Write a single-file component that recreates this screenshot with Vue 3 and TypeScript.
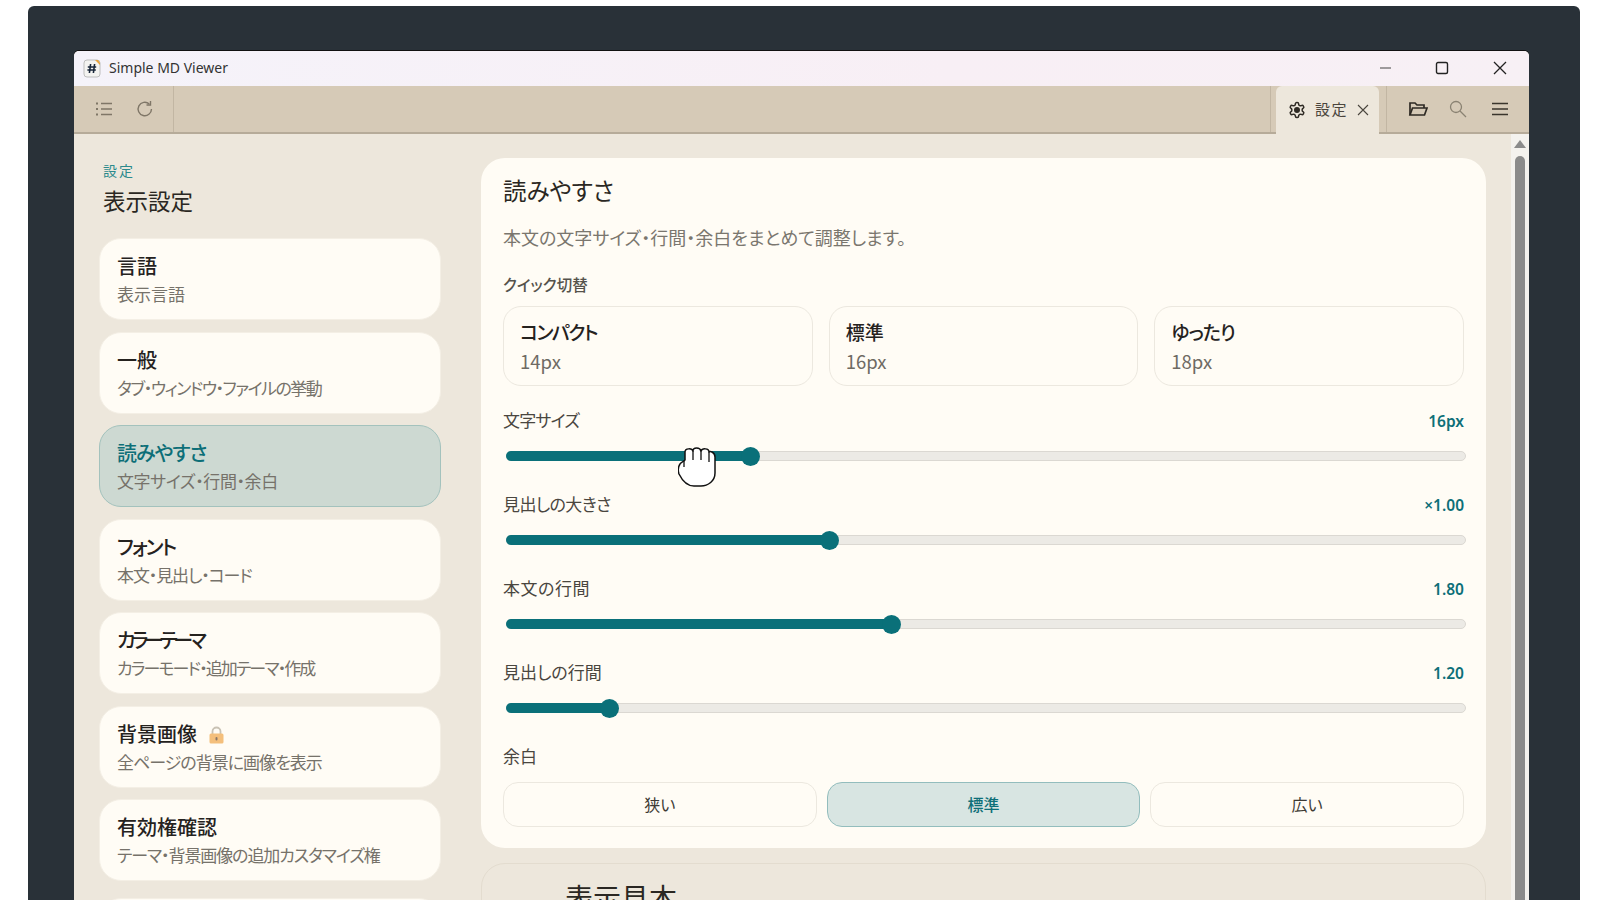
<template>
  <div class="frame">
    <div class="window">
      <header class="titlebar">
        <svg class="app-icon" width="19" height="19" viewBox="0 0 19 19">
          <rect x="1" y="1" width="16" height="17" rx="3" fill="#f4f3f1" stroke="#bdbdbd" />
          <path d="M12 1h3l2 3v2z" fill="#e8a33c" />
          <path d="M7.600 5 6.400 14M11.600 5l-1.200 9M4.800 8h8.400M4.400 11h8.400" stroke="#18263a" stroke-width="1.600" fill="none" />
        </svg>
        <span class="app-name">Simple MD Viewer</span>
        <div class="win-controls">
          <svg width="14" height="14" viewBox="0 0 14 14"><path d="M3 7h11" stroke="#444" stroke-width="1.200" /></svg>
          <svg width="14" height="14" viewBox="0 0 14 14"><rect x="1.500" y="1.500" width="11" height="11" rx="1.500" fill="none" stroke="#222" stroke-width="1.400" /></svg>
          <svg width="14" height="14" viewBox="0 0 14 14"><path d="M1 1l12 12M13 1 1 13" stroke="#222" stroke-width="1.300" /></svg>
        </div>
      </header>

      <div class="toolbar">
        <div class="tool-left">
          <svg width="18" height="18" viewBox="0 0 18 18" fill="none" stroke="#7f7667" stroke-width="1.400">
            <path d="M6 3.500h11M6 9h11M6 14.500h11" />
            <path d="M1 3.500h2M1 9h2M1 14.500h2" stroke-width="2" />
          </svg>
          <svg width="18" height="18" viewBox="0 0 18 18" fill="none" stroke="#7f7667" stroke-width="1.400">
            <path d="M15.500 9A6.700 6.700 0 1 1 13.300 4" />
            <path d="M14.500 1v4h-4" />
          </svg>
        </div>
        <div class="tool-spacer"></div>
        <div class="tab">
          <svg width="18" height="18" viewBox="0 0 24 24" fill="none" stroke="#2e2a24" stroke-width="2">
            <path d="M12.220 2h-.44a2 2 0 0 0-2 2v.18a2 2 0 0 1-1 1.730l-.43.25a2 2 0 0 1-2 0l-.15-.08a2 2 0 0 0-2.730.73l-.22.38a2 2 0 0 0 .73 2.730l.15.1a2 2 0 0 1 1 1.720v.51a2 2 0 0 1-1 1.740l-.15.09a2 2 0 0 0-.73 2.730l.22.38a2 2 0 0 0 2.730.73l.15-.08a2 2 0 0 1 2 0l.43.25a2 2 0 0 1 1 1.730V20a2 2 0 0 0 2 2h.44a2 2 0 0 0 2-2v-.18a2 2 0 0 1 1-1.730l.43-.25a2 2 0 0 1 2 0l.15.08a2 2 0 0 0 2.730-.73l.22-.39a2 2 0 0 0-.73-2.730l-.15-.08a2 2 0 0 1-1-1.740v-.5a2 2 0 0 1 1-1.740l.15-.09a2 2 0 0 0 .73-2.730l-.22-.38a2 2 0 0 0-2.730-.73l-.15.08a2 2 0 0 1-2 0l-.43-.25a2 2 0 0 1-1-1.730V4a2 2 0 0 0-2-2z" />
            <circle cx="12" cy="12" r="3" fill="#2e2a24" />
          </svg>
          <span class="tab-label">設定</span>
          <svg width="12" height="12" viewBox="0 0 12 12"><path d="M1 1l10 10M11 1 1 11" stroke="#4b463e" stroke-width="1.100" /></svg>
        </div>
        <div class="tool-right">
          <svg width="20" height="18" viewBox="0 0 20 18" fill="none" stroke="#2e2a24" stroke-width="1.700">
            <path d="M2 15V3h5l2 2h7v3" />
            <path d="M2 15 4.500 8H19l-2.500 7z" />
          </svg>
          <svg class="search-icon" width="18" height="18" viewBox="0 0 18 18" fill="none" stroke="#8a8272" stroke-width="1.300">
            <circle cx="7" cy="7" r="5.500" />
            <path d="m11 11 6 6" />
          </svg>
          <svg width="18" height="18" viewBox="0 0 18 18" fill="none" stroke="#3a352c" stroke-width="1.600">
            <path d="M1 3.500h16M1 9h16M1 14.500h16" />
          </svg>
        </div>
      </div>

      <div class="body">
        <div class="content">
          <aside class="sidebar">
            <div class="crumb">設定</div>
            <h1 class="side-title">表示設定</h1>
            <nav class="nav">
              <div v-for="item in navItems" :key="item.title" class="nav-item" :class="{ active: item.active }">
                <div class="nav-title">
                  <span :style="tracking(item.titleLs)">{{ item.title }}</span>
                  <svg v-if="item.locked" class="lock" width="17" height="18" viewBox="0 0 17 18">
                    <path d="M4.500 8V5.500a4 4 0 0 1 8 0V8" fill="none" stroke="#c9c2b4" stroke-width="1.800" />
                    <rect x="1.500" y="7.500" width="14" height="10" rx="1.500" fill="#f4bf7c" />
                    <rect x="7.500" y="11" width="2" height="3.500" rx="1" fill="#8a7868" />
                  </svg>
                </div>
                <div class="nav-sub" :style="tracking(item.subLs)">{{ item.sub }}</div>
              </div>
              <div class="nav-item nav-next"></div>
            </nav>
          </aside>

          <main class="main">
            <section class="panel">
              <h2 class="panel-title">読みやすさ</h2>
              <p class="panel-desc">本文の文字サイズ・行間・余白をまとめて調整します。</p>
              <div class="quick-label">クイック切替</div>
              <div class="quick-grid">
                <div v-for="q in quickOptions" :key="q.name" class="quick-card">
                  <div class="quick-name" :style="tracking(q.ls)">{{ q.name }}</div>
                  <div class="quick-size">{{ q.size }}</div>
                </div>
              </div>

              <div v-for="s in sliders" :key="s.label" class="slider-row">
                <div class="slider-head">
                  <span class="slider-label" :style="tracking(s.ls)">{{ s.label }}</span>
                  <span class="slider-value">{{ s.value }}</span>
                </div>
                <div class="track">
                  <div class="fill" :style="{ width: s.percent + '%' }">
                    <span class="thumb"></span>
                  </div>
                </div>
              </div>

              <div class="margin-label">余白</div>
              <div class="margin-grid">
                <button v-for="m in marginOptions" :key="m.label" class="margin-btn" :class="{ active: m.active }">{{ m.label }}</button>
              </div>

              <svg class="hand" width="40" height="42" viewBox="0 0 40 42">
                <path d="M7 13V5C7 1 14 1 15 4 15 0 22 0 23 4 24 1 31 1 31 5 32 4 37 5 37 10V26C37 34 30 39 23 39H16C9 39 4 33 1 27 0 24 0 20 2 17 3 15 5 15 7 13Z" fill="#fff" stroke="#111" stroke-width="1.500" stroke-linejoin="round" />
                <path d="M15 4v9M23 4v9M31 5v10M6 14v6" fill="none" stroke="#111" stroke-width="1.300" />
              </svg>
            </section>

            <section class="panel-next">
              <h2 class="next-title">表示見本</h2>
            </section>
          </main>
        </div>

        <div class="scrollbar">
          <span class="scroll-up"></span>
          <span class="scroll-thumb"></span>
        </div>
      </div>
    </div>
  </div>
</template>

<script setup lang="ts">
interface NavItem {
  title: string;
  sub: string;
  active?: boolean;
  locked?: boolean;
  titleLs?: number;
  subLs?: number;
}

// kana in the original font runs narrower than Noto, so each string gets its own tracking
const tracking = (ls?: number) => (ls ? { letterSpacing: ls + 'px' } : undefined);

const navItems: NavItem[] = [
  { title: '言語', sub: '表示言語' },
  { title: '一般', sub: 'タブ・ウィンドウ・ファイルの挙動', subLs: -1.5 },
  { title: '読みやすさ', sub: '文字サイズ・行間・余白', active: true, titleLs: -1, subLs: -0.4 },
  { title: 'フォント', sub: '本文・見出し・コード', titleLs: -1.8, subLs: -1.1 },
  { title: 'カラーテーマ', sub: 'カラーモード・追加テーマ・作成', titleLs: -4.3, subLs: -1.9 },
  { title: '背景画像', sub: '全ページの背景に画像を表示', locked: true, subLs: -1 },
  { title: '有効権確認', sub: 'テーマ・背景画像の追加カスタマイズ権', subLs: -1.1 },
];

const quickOptions = [
  { name: 'コンパクト', size: '14px', ls: -1.5 },
  { name: '標準', size: '16px', ls: 0 },
  { name: 'ゆったり', size: '18px', ls: -1 },
];

const sliders = [
  { label: '文字サイズ', value: '16px', percent: 25.5, ls: -0.8 },
  { label: '見出しの大きさ', value: '×1.00', percent: 33.8, ls: -0.6 },
  { label: '本文の行間', value: '1.80', percent: 40.2, ls: 0.5 },
  { label: '見出しの行間', value: '1.20', percent: 10.8, ls: 0 },
];

const marginOptions = [
  { label: '狭い' },
  { label: '標準', active: true },
  { label: '広い' },
];
</script>

<style>
html,
body {
  margin: 0;
  background: #fff;
  overflow: hidden;
}
</style>

<style scoped>
.frame {
  box-sizing: border-box;
  width: 1552px;
  height: 894px;
  margin: 6px 0 0 28px;
  padding: 45px 51px 0 46px;
  background: #293138;
  border-radius: 6px 6px 0 0;
  overflow: hidden;
  font-family: "Noto Sans CJK JP", sans-serif;
  font-feature-settings: "palt";
}

.window {
  display: flex;
  flex-direction: column;
  height: 849px;
  border-radius: 5px 5px 0 0;
  overflow: hidden;
  background: #ede7dc;
  box-shadow: 0 -1px 0 #111;
}

.titlebar {
  flex: none;
  display: flex;
  align-items: center;
  height: 35px;
  padding-left: 9px;
  background: linear-gradient(90deg, #f5f3fa, #f8eff5 60%, #f7f0f5);
}

.app-name {
  margin: 0 0 3px 7px;
  font: 14px "Noto Sans", sans-serif;
  color: #333;
}

.win-controls {
  display: flex;
  align-items: center;
  gap: 44px;
  margin-left: auto;
  padding: 0 22px 2px 0;
}

.toolbar {
  flex: none;
  display: flex;
  align-items: stretch;
  height: 48px;
  box-sizing: border-box;
  background: #d6cab7;
  border-bottom: 2px solid #b6ab99;
}

.tool-left {
  display: flex;
  align-items: center;
  gap: 23px;
  width: 100px;
  padding-left: 21px;
  box-sizing: border-box;
  border-right: 1px solid #c2b6a3;
}

.tool-spacer {
  flex: 1;
  border-right: 1px solid #c2b6a3;
}

.tab {
  display: flex;
  align-items: center;
  gap: 9px;
  width: 103px;
  height: 48px;
  box-sizing: border-box;
  margin: 0 7px 0 5px;
  padding-left: 12px;
  background: #ede7dc;
  border-radius: 6px 6px 0 0;
  color: #4b463e;
  font-size: 15px;
}

.tab-label {
  margin-bottom: 3px;
  letter-spacing: 1.500px;
}

.tool-right {
  display: flex;
  align-items: center;
  gap: 21px;
  padding: 0 20px 0 21px;
  border-left: 1px solid #c2b6a3;
}

.search-icon {
  margin-right: 3px;
}

.body {
  flex: 1;
  display: flex;
  min-height: 0;
}

.content {
  flex: 1;
  display: flex;
  min-width: 0;
  gap: 40px;
  padding-left: 25px;
}

.sidebar {
  flex: none;
  width: 342px;
}

.crumb {
  margin: 26px 0 0 4px;
  font-size: 14px;
  line-height: 20px;
  letter-spacing: 2px;
  color: #2b8a8c;
}

.side-title {
  margin: 7px 0 19px 4px;
  font-family: "Liberation Serif", "Noto Sans CJK JP", serif;
  font-size: 22.500px;
  line-height: 32px;
  font-weight: 400;
  color: #2a2722;
}

.nav {
  display: flex;
  flex-direction: column;
  gap: 11.500px;
}

.nav-item {
  box-sizing: border-box;
  height: 82px;
  flex: none;
  padding: 14px 0 0 17px;
  background: #fffcf5;
  border: 1px solid #f4efe5;
  border-radius: 22px;
}

.nav-item.active {
  background: #cdd9d2;
  border-color: #a3c2bd;
}

.nav-next {
  margin-top: 5px;
}

.nav-title {
  display: flex;
  align-items: center;
  gap: 11px;
  font-size: 20px;
  line-height: 26px;
  font-weight: 500;
  color: #25221e;
}

.lock {
  margin-top: 3px;
}

.nav-item.active .nav-title {
  color: #0d6f78;
}

.nav-sub {
  margin-top: 2px;
  font-size: 17px;
  line-height: 25px;
  color: #76726a;
}

.main {
  flex: none;
  width: 1005px;
  margin-top: 24px;
}

.panel {
  position: relative;
  box-sizing: border-box;
  padding: 19px 22px 21px;
  background: #fffcf5;
  border-radius: 24px;
}

.panel-title {
  margin: 0;
  font-family: "Liberation Serif", "Noto Sans CJK JP", serif;
  font-size: 23.500px;
  line-height: 30px;
  font-weight: 400;
  color: #2a2722;
}

.panel-desc {
  margin: 17px 0 0;
  font-size: 18px;
  line-height: 26px;
  color: #7a766e;
}

.quick-label {
  margin-top: 24px;
  font-size: 15.500px;
  line-height: 20px;
  font-weight: 500;
  color: #55524b;
}

.quick-grid {
  display: grid;
  grid-template-columns: repeat(3, 1fr);
  gap: 16px;
  margin-top: 12px;
}

.quick-card {
  box-sizing: border-box;
  height: 80px;
  padding: 12px 0 0 16px;
  border: 1px solid #ece8df;
  border-radius: 18px;
}

.quick-name {
  font-size: 19px;
  line-height: 26px;
  font-weight: 500;
  color: #25221e;
}

.quick-size {
  margin-top: 3px;
  font-size: 18.500px;
  line-height: 26px;
  color: #6e6a63;
}

.quick-grid + .slider-row {
  margin-top: 23px;
}

.slider-row + .slider-row {
  margin-top: 32px;
}

.slider-head {
  display: flex;
  align-items: center;
  justify-content: space-between;
  height: 24px;
}

.slider-label {
  margin-bottom: 3px;
  font-size: 17px;
  color: #4a463f;
}

.slider-value {
  margin-bottom: 1px;
  font-family: "Noto Sans", "Noto Sans CJK JP", sans-serif;
  font-size: 15.500px;
  font-weight: 600;
  color: #0d6f78;
}

.track {
  box-sizing: border-box;
  height: 10px;
  margin: 18px -2px 0 3px;
  background: #eceae5;
  border: 1px solid #dbd8d2;
  border-radius: 5px;
}

.fill {
  position: relative;
  height: 10px;
  margin: -1px 0 0 -1px;
  background: #0a7079;
  border-radius: 5px;
}

.thumb {
  position: absolute;
  right: -9.500px;
  top: -4.500px;
  width: 19px;
  height: 19px;
  border-radius: 50%;
  background: #0a7079;
}

.margin-label {
  margin-top: 31px;
  font-size: 17px;
  line-height: 24px;
  color: #4a463f;
}

.margin-grid {
  display: grid;
  grid-template-columns: repeat(3, 1fr);
  gap: 10px;
  margin-top: 14px;
}

.margin-btn {
  height: 45px;
  padding: 0 0 2px;
  font-family: inherit;
  font-feature-settings: inherit;
  font-size: 16px;
  color: #3d3a34;
  background: transparent;
  border: 1px solid #ece8df;
  border-radius: 15px;
}

.margin-btn.active {
  background: #d8e5e2;
  border-color: #93bdbd;
  color: #0d6f78;
  font-weight: 500;
}

.hand {
  position: absolute;
  left: 197px;
  top: 289px;
}

.panel-next {
  box-sizing: border-box;
  height: 120px;
  margin-top: 15px;
  padding: 18px 0 0 83px;
  border: 1px solid #e3dccf;
  border-radius: 24px;
}

.next-title {
  margin: 0;
  font-family: "Liberation Serif", "Noto Sans CJK JP", serif;
  font-size: 28px;
  line-height: 36px;
  font-weight: 400;
  color: #2a2722;
}

.scrollbar {
  flex: none;
  position: relative;
  width: 18px;
  background: #f4f2ee;
}

.scroll-up {
  display: block;
  width: 0;
  height: 0;
  margin: 6px 0 0 3px;
  border-left: 6px solid transparent;
  border-right: 6px solid transparent;
  border-bottom: 8px solid #8b8b8b;
}

.scroll-thumb {
  display: block;
  width: 10px;
  height: 760px;
  margin: 8px 0 0 4px;
  background: #8b8b8b;
  border-radius: 5px;
}
</style>
